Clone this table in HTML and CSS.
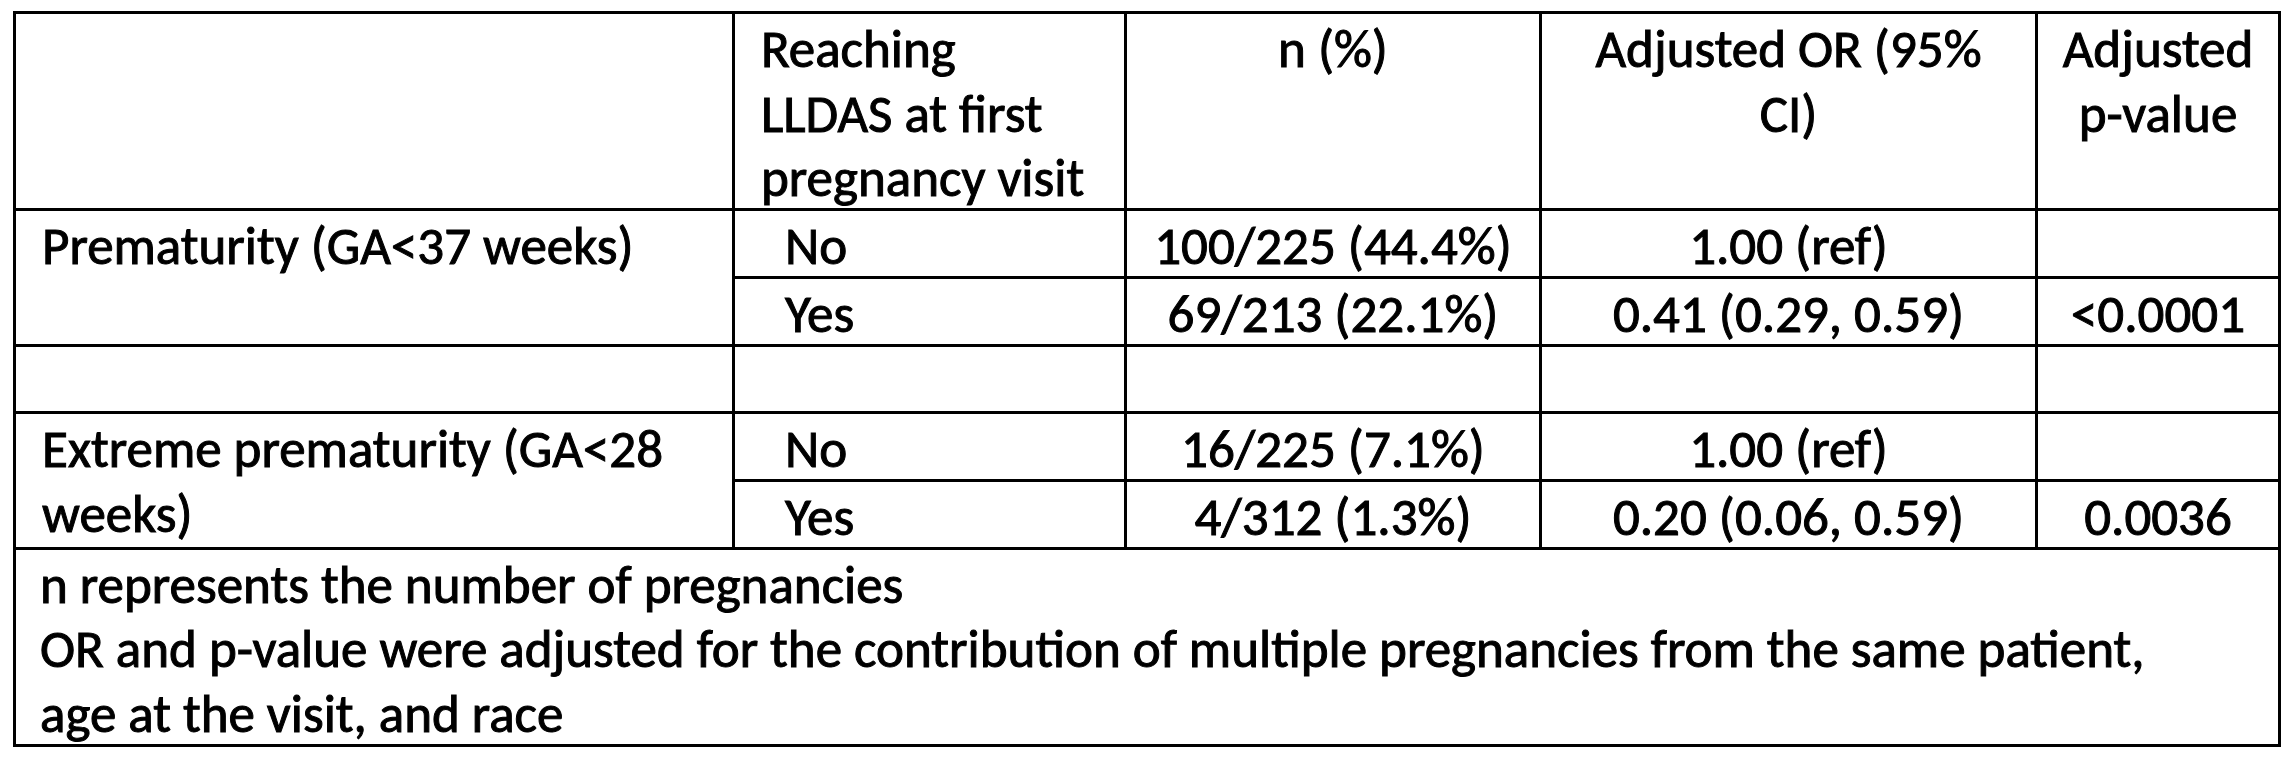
FILE: index.html
```html
<!DOCTYPE html>
<html lang="en">
<head>
<meta charset="utf-8">
<title>Prematurity and LLDAS</title>
<link rel="stylesheet" href="styles.css">
</head>
<body>
<table class="grid">
  <colgroup>
    <col class="c1"><col class="c2"><col class="c3"><col class="c4"><col class="c5">
  </colgroup>
  <tr>
    <td></td>
    <td><div class="tx">Reaching<br>LLDAS at first<br>pregnancy visit</div></td>
    <td class="ctr"><div class="tx">n (%)</div></td>
    <td class="ctr"><div class="tx">Adjusted OR (95%<br>CI)</div></td>
    <td class="ctr"><div class="tx">Adjusted<br>p-value</div></td>
  </tr>
  <tr>
    <td rowspan="2"><div class="tx">Prematurity (GA&lt;37 weeks)</div></td>
    <td class="ind"><div class="tx">No</div></td>
    <td class="ctr"><div class="tx">100/225 (44.4%)</div></td>
    <td class="ctr"><div class="tx">1.00 (ref)</div></td>
    <td></td>
  </tr>
  <tr>
    <td class="ind"><div class="tx">Yes</div></td>
    <td class="ctr"><div class="tx">69/213 (22.1%)</div></td>
    <td class="ctr"><div class="tx">0.41 (0.29, 0.59)</div></td>
    <td class="ctr"><div class="tx">&lt;0.0001</div></td>
  </tr>
  <tr>
    <td><div class="tx">&nbsp;</div></td>
    <td></td>
    <td></td>
    <td></td>
    <td></td>
  </tr>
  <tr>
    <td rowspan="2"><div class="tx">Extreme prematurity (GA&lt;28<br>weeks)</div></td>
    <td class="ind"><div class="tx">No</div></td>
    <td class="ctr"><div class="tx">16/225 (7.1%)</div></td>
    <td class="ctr"><div class="tx">1.00 (ref)</div></td>
    <td></td>
  </tr>
  <tr>
    <td class="ind"><div class="tx">Yes</div></td>
    <td class="ctr"><div class="tx">4/312 (1.3%)</div></td>
    <td class="ctr"><div class="tx">0.20 (0.06, 0.59)</div></td>
    <td class="ctr"><div class="tx">0.0036</div></td>
  </tr>
  <tr>
    <td colspan="5" class="foot"><div class="tx">n represents the number of pregnancies<br>OR and p-value were adjusted for the contribution of multiple pregnancies from the same patient,<br>age at the visit, and race</div></td>
  </tr>
</table>
</body>
</html>
```

FILE: styles.css
```css
html, body {
  margin: 0;
  padding: 0;
  background: #ffffff;
}

body {
  padding: 11px 0 0 13px;
  font-family: Carlito, Calibri, Lato, "Open Sans", sans-serif;
  font-size: 53px;
  color: #000000;
  -webkit-text-stroke: 1px #000000;
}

.grid {
  border-collapse: collapse;
  table-layout: fixed;
  width: 2268px;
}

.c1 { width: 719px; }
.c2 { width: 392px; }
.c3 { width: 415px; }
.c4 { width: 496px; }
.c5 { width: 243px; }

.grid td {
  border: 3px solid #000000;
  padding: 0 20px 0 26px;
  vertical-align: top;
  white-space: nowrap;
  line-height: 64.7px;
}

.grid td.ctr {
  text-align: center;
  padding: 0 6px;
}

.grid td.ind {
  padding-left: 50px;
}

.grid td.foot {
  padding-left: 24px;
}

.tx {
  padding-top: 3px;
  margin-bottom: -3px;
}
```
